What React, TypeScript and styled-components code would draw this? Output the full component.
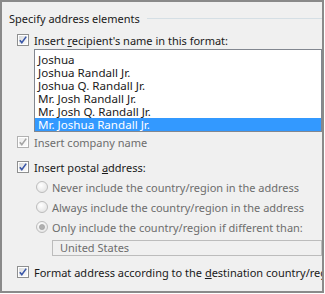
import React from 'react';
import styled, { createGlobalStyle } from 'styled-components';

const GlobalStyle = createGlobalStyle`
  body {
    margin: 0;
    background: #ffffff;
    font-family: "Noto Sans", "Open Sans", sans-serif;
  }
`;

const Frame = styled.div`
  width: 324px;
  height: 293px;
  box-sizing: border-box;
  border: 2px solid #8a8a8a;
  background: #f0f0f0;
  padding: 6px 0 0 7px;
  overflow: hidden;
  display: flex;
  flex-direction: column;
  font-size: 11px;
  color: #1a1a1a;
  white-space: nowrap;
`;

const GroupHeader = styled.div`
  display: flex;
  align-items: center;
  height: 20px;
  gap: 7px;

  &::after {
    content: '';
    flex: 1;
    border-top: 1px solid #d5dfe5;
  }
`;

const OptionRow = styled.div<{ $indent: number; $top: number; $gap?: number }>`
  display: flex;
  align-items: center;
  height: 16px;
  gap: ${p => p.$gap ?? 5}px;
  margin-left: ${p => p.$indent}px;
  margin-top: ${p => p.$top}px;
`;

const Label = styled.span<{ $disabled?: boolean }>`
  color: ${p => (p.$disabled ? '#6d6d6d' : '#1a1a1a')};

  u {
    text-decoration: underline;
    text-underline-offset: 1px;
  }
`;

const NameList = styled.div`
  margin: 1px 0 0 25px;
  height: 83px;
  box-sizing: border-box;
  border: 1px solid #828790;
  background: #ffffff;
  padding-top: 3px;
  font-size: 11.6px;
`;

const NameItem = styled.div<{ $selected?: boolean }>`
  height: 13px;
  line-height: 13px;
  padding-left: 3px;
  overflow: hidden;
  background: ${p => (p.$selected ? '#3399ff' : 'transparent')};
  color: ${p => (p.$selected ? '#ffffff' : '#1a1a1a')};
`;

const CountryBox = styled.div`
  margin: 5px 0 0 43px;
  height: 16px;
  box-sizing: border-box;
  border: 1px solid #bcbcbc;
  padding-left: 7px;
  line-height: 14px;
  color: #6d6d6d;
`;

const BoxSvg = styled.svg`
  flex-shrink: 0;
  display: block;
`;

function Checkbox({ disabled }: { disabled?: boolean }) {
  const edge = disabled ? '#b1b1b1' : '#8e8f8f';
  const tick = disabled ? '#a5a5a5' : '#3a57a8';
  return (
    <BoxSvg width="12" height="12" viewBox="0 0 12 12">
      <defs>
        <linearGradient id={disabled ? 'cbd' : 'cb'} x1="0" y1="0" x2="1" y2="1">
          <stop offset="0" stopColor={disabled ? '#ececec' : '#d9dbdd'} />
          <stop offset="1" stopColor="#fbfbfb" />
        </linearGradient>
      </defs>
      <rect x="0.5" y="0.5" width="11" height="11" fill="#ffffff" stroke={edge} />
      <rect x="2" y="2" width="8" height="8" fill={`url(#${disabled ? 'cbd' : 'cb'})`} />
      <path d="M2.8 6.2 L4.8 8.6 L9.2 2.6" fill="none" stroke={tick} strokeWidth="1.6" />
    </BoxSvg>
  );
}

function Radio({ checked }: { checked?: boolean }) {
  return (
    <BoxSvg width="12" height="12" viewBox="0 0 12 12">
      <defs>
        <radialGradient id="rg" cx="0.4" cy="0.35" r="0.7">
          <stop offset="0" stopColor="#ffffff" />
          <stop offset="1" stopColor="#e3e3e3" />
        </radialGradient>
      </defs>
      <circle cx="6" cy="6" r="5.5" fill="url(#rg)" stroke="#bcbcbc" />
      {checked && <circle cx="6" cy="6" r="2.6" fill="#b0b0b0" stroke="#9a9a9a" strokeWidth="0.6" />}
    </BoxSvg>
  );
}

const names = [
  'Joshua',
  'Joshua Randall Jr.',
  'Joshua Q. Randall Jr.',
  'Mr. Josh Randall Jr.',
  'Mr. Josh Q. Randall Jr.',
  'Mr. Joshua Randall Jr.',
];

export default function App() {
  return (
    <>
      <GlobalStyle />
      <Frame>
        <GroupHeader>Specify address elements</GroupHeader>
        <OptionRow $indent={8} $top={4}>
          <Checkbox />
          <Label>
            Insert <u>r</u>ecipient's name in this format:
          </Label>
        </OptionRow>
        <NameList>
          {names.map((n, i) => (
            <NameItem key={n} $selected={i === names.length - 1}>
              {n}
            </NameItem>
          ))}
        </NameList>
        <OptionRow $indent={8} $top={2}>
          <Checkbox disabled />
          <Label $disabled>Insert company name</Label>
        </OptionRow>
        <OptionRow $indent={8} $top={9}>
          <Checkbox />
          <Label>
            Insert postal <u>a</u>ddress:
          </Label>
        </OptionRow>
        <OptionRow $indent={27} $top={4} $gap={4}>
          <Radio />
          <Label $disabled>Never include the country/region in the address</Label>
        </OptionRow>
        <OptionRow $indent={27} $top={4} $gap={4}>
          <Radio />
          <Label $disabled>Always include the country/region in the address</Label>
        </OptionRow>
        <OptionRow $indent={27} $top={4} $gap={4}>
          <Radio checked />
          <Label $disabled>Only include the country/region if different than:</Label>
        </OptionRow>
        <CountryBox>United States</CountryBox>
        <OptionRow $indent={8} $top={8}>
          <Checkbox />
          <Label>
            Format address according to the <u>d</u>estination country/region
          </Label>
        </OptionRow>
      </Frame>
    </>
  );
}
